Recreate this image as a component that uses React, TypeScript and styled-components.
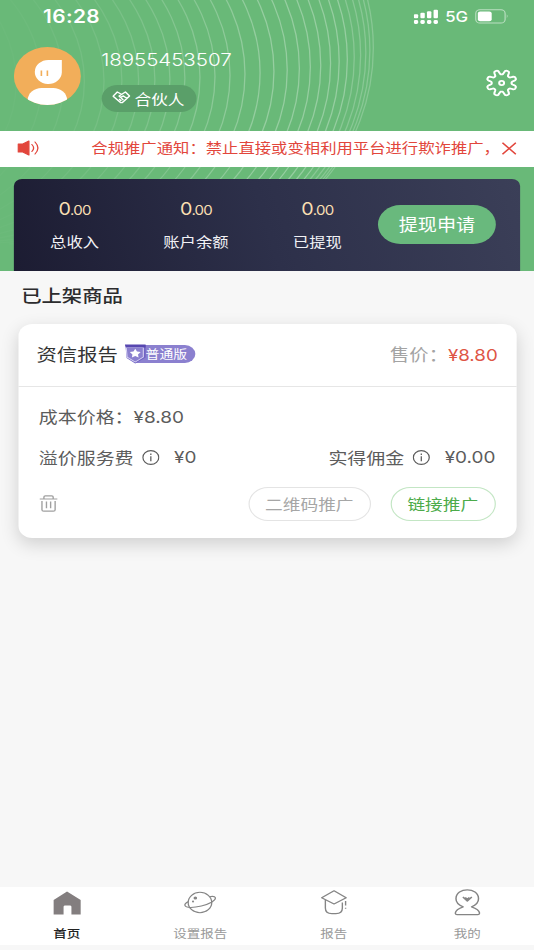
import React from 'react';
import styled, { createGlobalStyle } from 'styled-components';

const GlobalStyle = createGlobalStyle`
  * { box-sizing: border-box; }
  body { margin: 0; background: #f7f7f7; overflow: hidden; }
`;

const Screen = styled.div`
  width: 462px;
  height: 950px;
  display: flex;
  flex-direction: column;
  transform: scaleX(1.15584);
  transform-origin: 0 0;
  background: #f7f7f7;
  font-family: Inter, 'Noto Sans CJK SC', sans-serif;
  color: #333;
  white-space: nowrap;
`;

const Hero = styled.header`
  position: relative;
  height: 270.5px;
  background: #69b978;
  display: flex;
  flex-direction: column;
  overflow: hidden;
`;

const Rings = styled.svg`
  position: absolute;
  inset: 0;
`;

const StatusBar = styled.div`
  position: relative;
  height: 33px;
  padding: 0 21px 0 37.3px;
  display: flex;
  align-items: center;
  color: #fff;
`;

const Clock = styled.span`
  font-size: 18px;
  font-weight: 600;
  letter-spacing: 0.3px;
  flex: 1;
`;

const Network = styled.span`
  font-size: 14.5px;
  font-weight: 500;
  margin: 0 6px 0 5.5px;
`;

const Profile = styled.div`
  position: relative;
  height: 98px;
  padding: 14px 14px 0 12px;
  display: flex;
  align-items: flex-start;
`;

const Identity = styled.div`
  flex: 1;
  margin-left: 17.5px;
  display: flex;
  flex-direction: column;
  align-items: flex-start;
`;

const Phone = styled.div`
  height: 26px;
  line-height: 26px;
  font-size: 17.8px;
  font-weight: 300;
  letter-spacing: -0.04px;
  color: #fff;
`;

const RolePill = styled.div`
  margin-top: 12px;
  width: 82px;
  height: 27px;
  padding-bottom: 1px;
  border-radius: 14px;
  background: #5a9f69;
  display: flex;
  align-items: center;
  justify-content: center;
  gap: 3px;
  color: #fff;
  font-size: 14.4px;
`;

const SettingsButton = styled.div`
  margin-top: 21.5px;
  height: 29px;
`;

const Notice = styled.div`
  position: relative;
  height: 35.5px;
  padding: 0 15px 1px 15px;
  background: #fff;
  display: flex;
  align-items: center;
  color: #e2463c;
`;

const NoticeText = styled.span`
  margin-left: 45px;
  overflow: hidden;
  font-size: 14.15px;
  line-height: 24px;
  flex: 1;
`;

const Balance = styled.section`
  position: relative;
  margin: 12px 12px 0;
  height: 92px;
  border-radius: 7px 7px 0 0;
  background: linear-gradient(75deg, #1c1c32 0%, #2d304a 50%, #3b3f58 100%);
  display: flex;
  align-items: flex-start;
`;

const Stat = styled.div`
  width: 105px;
  padding-top: 19px;
  display: flex;
  flex-direction: column;
  align-items: center;
`;

const Amount = styled.div`
  height: 22px;
  line-height: 22px;
  font-size: 17px;
  letter-spacing: -0.7px;
  color: #f9dfb2;
  small { font-size: 13px; }
`;

const StatLabel = styled.div`
  margin-top: 11px;
  height: 22px;
  line-height: 22px;
  font-size: 14.1px;
  color: #f1f1f5;
`;

const Withdraw = styled.div`
  margin-top: 26.5px;
  width: 102px;
  height: 39px;
  padding-bottom: 1px;
  border-radius: 20px;
  background: #69b97d;
  color: #fff;
  font-size: 16.5px;
  display: flex;
  align-items: center;
  justify-content: center;
`;

const SectionTitle = styled.h2`
  margin: 11px 0 0 18.3px;
  height: 28px;
  line-height: 28px;
  font-size: 17.6px;
  font-weight: 500;
  color: #2c2c2e;
`;

const Card = styled.section`
  margin: 14.5px 15.4px 0 15.6px;
  height: 214px;
  border-radius: 12px;
  background: #fff;
  box-shadow: 0 6px 17px rgba(0, 0, 0, 0.16);
`;

const CardHead = styled.div`
  height: 62.5px;
  padding: 0 16px 2px;
  border-bottom: 1.5px solid #e6e6e6;
  display: flex;
  align-items: center;
`;

const ProductName = styled.span`
  font-size: 17.6px;
  color: #333;
`;

const Grade = styled.div`
  margin-left: 6px;
  display: flex;
  align-items: center;
  width: 61px;
  height: 19px;
`;

const GradeLabel = styled.span`
  width: 51px;
  height: 18px;
  margin-left: -9px;
  padding-left: 8px;
  border-radius: 0 9px 9px 0;
  background: #8b80cf;
  color: #fff;
  font-size: 12px;
  font-weight: 400;
  line-height: 19px;
`;

const GradeShield = styled.svg`
  position: relative;
  flex: none;
`;

const Price = styled.div`
  margin-left: auto;
  font-size: 16.7px;
  color: #a3a3a3;
  em { font-style: normal; font-size: 16.2px; color: #de5546; }
`;

const CardBody = styled.div`
  padding: 8.5px 18px 0;
`;

const Row = styled.div<{ $height: number }>`
  height: ${(p) => p.$height}px;
  display: flex;
  align-items: center;
  justify-content: space-between;
`;

const Field = styled.div`
  display: flex;
  align-items: center;
  font-size: 16.4px;
  color: #5c5c5c;
  svg { margin: 0 13px 0 7px; }
`;

const Actions = styled.div`
  margin-top: 1px;
  display: flex;
  gap: 17px;
`;

const Action = styled.div<{ $width: number; $primary?: boolean }>`
  width: ${(p) => p.$width}px;
  height: 34px;
  padding-bottom: 2px;
  border-radius: 17px;
  border: 1px solid ${(p) => (p.$primary ? '#c3e6c4' : '#e4e4e4')};
  color: ${(p) => (p.$primary ? '#4cab4a' : '#a6a6a6')};
  font-size: 15.3px;
  display: flex;
  align-items: center;
  justify-content: center;
`;

const TabBar = styled.nav`
  margin-top: auto;
  margin-bottom: 5px;
  height: 58px;
  background: #fff;
  display: flex;
`;

const Tab = styled.div<{ $active?: boolean }>`
  flex: 1;
  display: flex;
  flex-direction: column;
  align-items: center;
  padding-top: 1px;
  font-size: 11.7px;
  line-height: 18px;
  font-weight: ${(p) => (p.$active ? 500 : 400)};
  color: ${(p) => (p.$active ? '#222' : '#999')};
  svg { margin-bottom: 7px; }
`;

const ringEdges = [
  14, 36, 55, 73, 90, 105.5, 120, 134, 147, 160, 173, 186, 199, 212, 225, 237, 248.5, 259, 268.5, 277.5,
  286, 293.5, 300.5, 306.5, 312, 316.5, 320, 323,
];

const RingPattern = () => (
  <Rings width="462" height="271" viewBox="0 0 462 271" fill="none">
    <defs>
      <linearGradient id="ringFade" gradientUnits="userSpaceOnUse" x1="10" y1="0" x2="230" y2="0">
        <stop offset="0" stopColor="#fff" stopOpacity="0.02" />
        <stop offset="0.4" stopColor="#fff" stopOpacity="0.1" />
        <stop offset="1" stopColor="#fff" stopOpacity="0.3" />
      </linearGradient>
    </defs>
    {ringEdges.map((x, i) => {
      const t = i / (ringEdges.length - 1);
      const cx = x - 165;
      const cy = 82 - 34 * t * t;
      const ry = 148 + 50 * t;
      return (
        <path
          key={x}
          d={`M${cx} ${cy - ry}A165 ${ry} 0 0 1 ${cx} ${cy + ry}`}
          stroke="url(#ringFade)"
          strokeOpacity={t > 0.85 ? 0.7 : 1}
          strokeWidth="1.1"
        />
      );
    })}
  </Rings>
);

const Signal = () => (
  <svg width="21.5" height="16" viewBox="0 0 21.5 16" fill="#fff">
    {[0, 1, 2, 3].map((i) => (
      <React.Fragment key={i}>
        <rect x={i * 5.7} y={5.2 - i * 1.5} width="3.8" height={4 + i * 1.5} rx="1" />
        <rect x={i * 5.7} y="11" width="3.8" height="4" rx="1.4" />
      </React.Fragment>
    ))}
  </svg>
);

const Battery = () => (
  <svg width="30" height="15" viewBox="0 0 30 15">
    <rect x=".6" y=".8" width="25.4" height="13.2" rx="3.6" fill="none" stroke="#fff" strokeOpacity=".55" />
    <rect x="2.4" y="2.6" width="12" height="9.6" rx="2" fill="#fff" />
    <path d="M27.5 5.2q1.6 2.2 0 4.4z" fill="#fff" fillOpacity=".6" />
  </svg>
);

const Avatar = () => (
  <svg width="58" height="58" viewBox="0 0 58 58">
    <defs>
      <clipPath id="face"><circle cx="29" cy="29" r="29" /></clipPath>
    </defs>
    <g clipPath="url(#face)">
      <rect width="58" height="58" fill="#f2ae5a" />
      <path d="M30 13h11.5v12.5A11.7 12 0 1 1 30 13z" fill="#fff" />
      <rect x="12" y="41" width="34" height="24" rx="12" fill="#fff" />
      <path d="M23.8 23.5v5.5M29 23.5v5.5" stroke="#f2ae5a" strokeWidth="1.4" />
    </g>
  </svg>
);

const Handshake = () => (
  <svg width="16" height="14" viewBox="0 0 16 14" fill="none" stroke="#fff" strokeWidth="1.3" strokeLinejoin="round">
    <path d="M8 3.2L4.5 1 .9 5.2l6.6 6.5 1.4-.2L15.1 5 11.5 1 6 5.1l1.4 1.3 2.4-1.5 3 2.5" />
    <path d="M6 8l2 2M7.7 7l2 2" />
  </svg>
);

const gearPath = (() => {
  const points: string[] = [];
  for (let i = 0; i <= 160; i++) {
    const a = (i / 160) * Math.PI * 2;
    const wave = Math.cos(8 * a + Math.PI);
    const r = 10.8 + 2.3 * Math.tanh(wave * 2);
    points.push(`${(14 + r * Math.cos(a)).toFixed(2)} ${(14 + r * Math.sin(a)).toFixed(2)}`);
  }
  return `M${points.join('L')}z`;
})();

const Gear = () => (
  <svg width="28" height="28" viewBox="0 0 28 28" fill="none" stroke="#fff" strokeWidth="1.8" strokeLinejoin="round">
    <path d={gearPath} />
    <circle cx="14" cy="14" r="2.1" />
  </svg>
);

const Speaker = () => (
  <svg width="19" height="16" viewBox="0 0 19 16" fill="none" stroke="#e2463c" strokeWidth="1.1" strokeLinecap="round">
    <path d="M.7 4h4L10 1v14l-5.3-3h-4z" fill="#e2463c" strokeLinejoin="round" />
    <path d="M12.6 4.5q3 3.5 0 7M15.3 2q5 6 0 12" />
  </svg>
);

const Close = () => (
  <svg width="13" height="13" viewBox="0 0 13 13" stroke="#e2463c" strokeWidth="1.4">
    <path d="M.7 .7l11.6 11.6M12.3 .7L.7 12.3" />
  </svg>
);

const Shield = () => (
  <GradeShield width="19" height="20" viewBox="0 0 19 20">
    <path d="M.5 1h17.500v12.500L9 19.500 1.500 14z" fill="#7063c3" />
    <path d="M1.200 3.500H16v9.500l-7 5L2 13.200z" fill="#8b80cf" stroke="#d9d4f4" strokeWidth=".9" />
    <path d="M0 .5h18v3H1z" fill="#5747b0" />
    <path d="M9 4.700l1.500 2.900 3.200.5-2.300 2.300.5 3.200L9 12.100l-2.900 1.500.5-3.200-2.300-2.300 3.200-.5z" fill="#fff" />
  </GradeShield>
);

const Info = () => (
  <svg width="15" height="15" viewBox="0 0 15 15" fill="none" stroke="#5c5c5c">
    <circle cx="7.5" cy="7.5" r="6.9" strokeWidth="1.1" />
    <path d="M7.5 6.2v5M7.5 3.6v1.3" strokeWidth="1.1" />
  </svg>
);

const Trash = () => (
  <svg width="16" height="17" viewBox="0 0 16 17" fill="none" stroke="#a0a0a0" strokeWidth="1.2">
    <path d="M.3 4h15.4M4 4V2q0-1.2 1.2-1.2h5.600q1.200 0 1.200 1.200v2M2.300 6v8.700q0 1.500 1.500 1.500h8.400q1.500 0 1.500-1.500V6M6.200 6.500v6.700M9.800 6.500v6.700" />
  </svg>
);

const Home = () => (
  <svg width="30" height="30" viewBox="0 0 30 30">
    <path d="M3.400 26.500V12L15 3.600 26.800 12v14.500h-8v-7.700q0-1.300-1.300-1.300h-4.200q-1.300 0-1.300 1.300v7.700z" fill="#837e7f" />
  </svg>
);

const Planet = () => (
  <svg width="30" height="30" viewBox="0 0 30 30" fill="none" stroke="#858585" strokeWidth="1.1">
    <circle cx="15" cy="14.5" r="10.2" />
    <path d="M5.200 13.500q-3.700 2-3.200 3.900c.7 2.800 7.600 2.400 14.200.6S29 12.500 28.300 9.700q-.5-2-5.100-1" />
    <circle cx="11" cy="10" r="1" fill="#858585" />
    <circle cx="9" cy="13.5" r=".4" />
  </svg>
);

const Graduate = () => (
  <svg width="30" height="30" viewBox="0 0 30 30" fill="none" stroke="#858585" strokeWidth="1.2" strokeLinejoin="round">
    <path d="M4.300 9.800L15 2.800l10.500 7L15 16z" />
    <path d="M7.500 12v8q0 5.600 5.600 5.600h3.500q5.600 0 5.600-5.600v-5.500M25 13v4.500M25 19.800v1" />
  </svg>
);

const Person = () => (
  <svg width="30" height="30" viewBox="0 0 30 30" fill="none" stroke="#858585" strokeWidth="1.3" strokeLinejoin="round">
    <path d="M11.700 18.800Q5.500 16.200 5.500 10.800c0-11.900 19.500-11.900 19.500 0q0 5.400-6 8 6.400 2.600 6.800 5.900.2 2-1.500 2H6.500q-1.700 0-1.500-2 .4-3.300 6.700-5.900z" />
    <path d="M11.500 9l3.800 4L19.200 9M13.500 9.500l1.800 1.800 1.800-1.800" strokeWidth="1.400" />
  </svg>
);

const stats = ['总收入', '账户余额', '已提现'];

const tabs = [
  { label: '首页', Icon: Home, active: true },
  { label: '设置报告', Icon: Planet },
  { label: '报告', Icon: Graduate },
  { label: '我的', Icon: Person },
];

export default function App() {
  return (
    <>
      <GlobalStyle />
      <Screen>
        <Hero>
          <RingPattern />
          <StatusBar>
            <Clock>16:28</Clock>
            <Signal />
            <Network>5G</Network>
            <Battery />
          </StatusBar>
          <Profile>
            <Avatar />
            <Identity>
              <Phone>18955453507</Phone>
              <RolePill>
                <Handshake />
                合伙人
              </RolePill>
            </Identity>
            <SettingsButton>
              <Gear />
            </SettingsButton>
          </Profile>
          <Notice>
            <Speaker />
            <NoticeText>合规推广通知：禁止直接或变相利用平台进行欺诈推广，</NoticeText>
            <Close />
          </Notice>
          <Balance>
            {stats.map((label) => (
              <Stat key={label}>
                <Amount>0<small>.00</small></Amount>
                <StatLabel>{label}</StatLabel>
              </Stat>
            ))}
            <Withdraw>提现申请</Withdraw>
          </Balance>
        </Hero>
        <SectionTitle>已上架商品</SectionTitle>
        <Card>
          <CardHead>
            <ProductName>资信报告</ProductName>
            <Grade>
              <Shield />
              <GradeLabel>普通版</GradeLabel>
            </Grade>
            <Price>售价：<em>¥8.80</em></Price>
          </CardHead>
          <CardBody>
            <Row $height={41}>
              <Field>成本价格：¥8.80</Field>
            </Row>
            <Row $height={42}>
              <Field>溢价服务费<Info />¥0</Field>
              <Field>实得佣金<Info />¥0.00</Field>
            </Row>
            <Row $height={50}>
              <Trash />
              <Actions>
                <Action $width={106}>二维码推广</Action>
                <Action $width={91} $primary>链接推广</Action>
              </Actions>
            </Row>
          </CardBody>
        </Card>
        <TabBar>
          {tabs.map(({ label, Icon, active }) => (
            <Tab key={label} $active={active}>
              <Icon />
              {label}
            </Tab>
          ))}
        </TabBar>
      </Screen>
    </>
  );
}
